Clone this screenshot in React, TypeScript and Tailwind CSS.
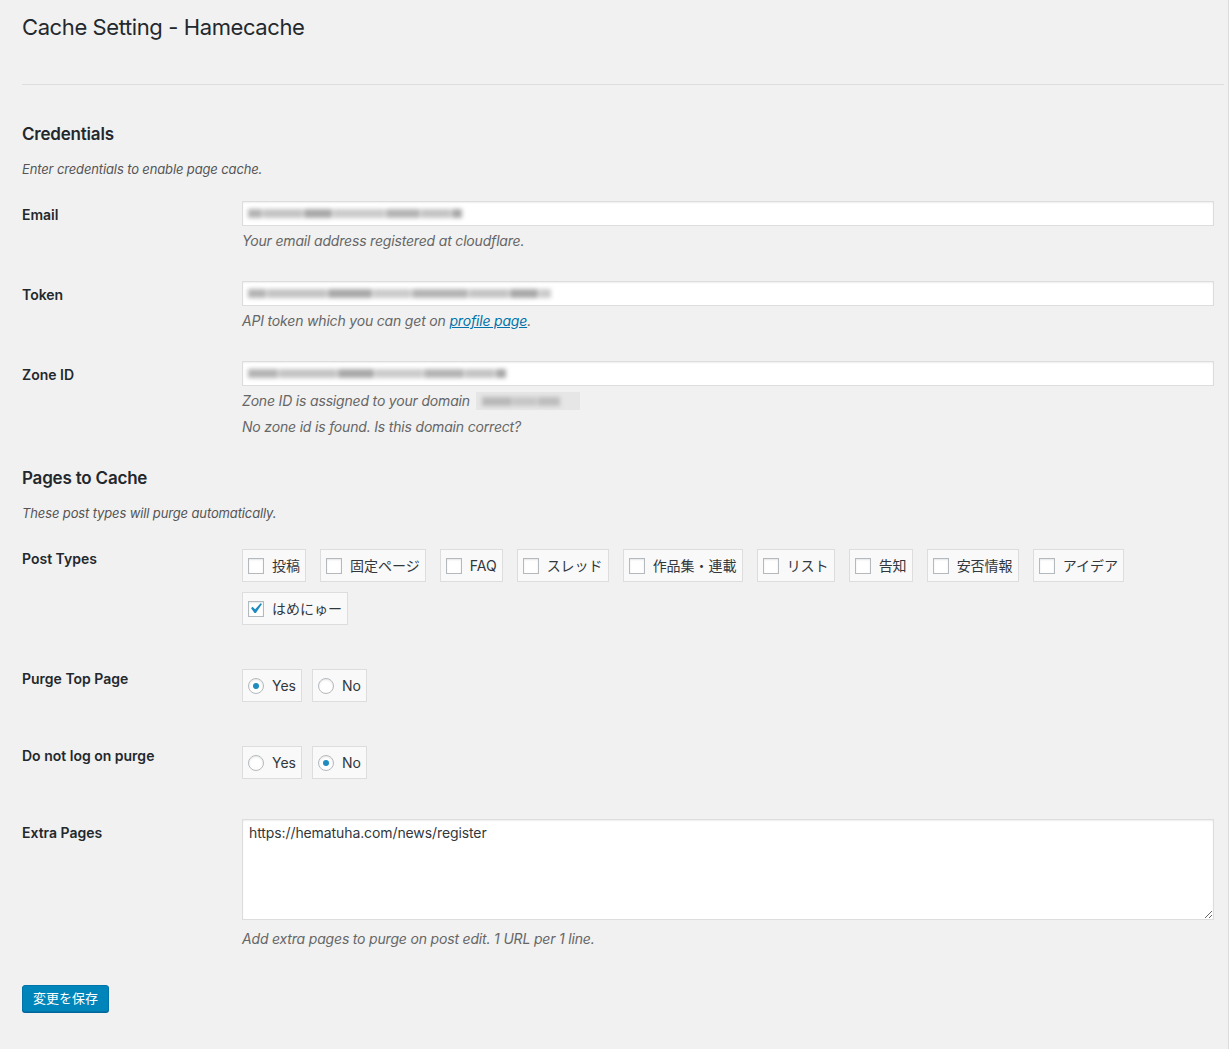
import React from 'react';

const FONT = '"Inter", "Noto Sans CJK JP", sans-serif';

const postTypes: { label: string; checked?: boolean }[] = [
  { label: '投稿' },
  { label: '固定ページ' },
  { label: 'FAQ' },
  { label: 'スレッド' },
  { label: '作品集・連載' },
  { label: 'リスト' },
  { label: '告知' },
  { label: '安否情報' },
  { label: 'アイデア' },
  { label: 'はめにゅー', checked: true },
];

// masked values: grey blocks, blurred
function Masked({ widths, shades }: { widths: number[]; shades: string[] }) {
  return (
    <span className="flex items-center gap-[1px] blur-[2px]">
      {widths.map((w, i) => (
        <span key={i} className="h-[9px] inline-block" style={{ width: w, background: shades[i % shades.length] }} />
      ))}
    </span>
  );
}

function TextInput({ widths }: { widths: number[] }) {
  return (
    <div className="h-[25px] w-[972px] bg-white border border-[#ddd] shadow-[inset_0_1px_2px_rgba(0,0,0,0.07)] flex items-center pl-[5px]">
      <Masked widths={widths} shades={['#b4b4b4', '#c4c4c4', '#a8a8a8', '#cbcbcb']} />
    </div>
  );
}

function Checkbox({ checked }: { checked?: boolean }) {
  return (
    <span className="relative w-4 h-4 bg-white border border-[#b4b9be] shadow-[inset_0_1px_2px_rgba(0,0,0,0.1)] shrink-0">
      {checked && (
        <svg viewBox="0 0 20 20" className="absolute -left-[4px] -top-[4px] w-[21px] h-[21px]">
          <path d="M14.83 4.89l1.34.94-5.81 8.38H9.02L5.78 9.67l1.34-1.25 2.57 2.4z" fill="#1e8cbe" />
        </svg>
      )}
    </span>
  );
}

function Radio({ checked }: { checked?: boolean }) {
  return (
    <span className="w-4 h-4 rounded-full bg-white border border-[#b4b9be] shadow-[inset_0_1px_2px_rgba(0,0,0,0.1)] flex items-center justify-center shrink-0">
      {checked && <span className="w-[6px] h-[6px] rounded-full bg-[#1e8cbe]" />}
    </span>
  );
}

function Choice({ label, children }: { label: string; children: React.ReactNode }) {
  return (
    <label className="h-[33px] flex items-center gap-2 pl-[5px] pr-[5px] border border-[#ddd] bg-[#f9f9f9] text-[14px] text-[#32373c]">
      {children}
      <span>{label}</span>
    </label>
  );
}

function Row({ label, labelPad, children }: { label: string; labelPad: string; children: React.ReactNode }) {
  return (
    <div className="grid grid-cols-[220px_1fr]">
      <div className={`text-[14px] leading-[18px] font-semibold text-[#23282d] ${labelPad}`}>{label}</div>
      <div>{children}</div>
    </div>
  );
}

function Desc({ children, className = '' }: { children: React.ReactNode; className?: string }) {
  return <p className={`text-[14px] leading-[20px] italic tracking-[-0.18px] text-[#666] ${className}`}>{children}</p>;
}

export default function App() {
  return (
    <div className="min-h-screen w-[1229px] bg-[#f1f1f1] border-r border-[#dcdcdc]" style={{ fontFamily: FONT }}>
      <div className="pl-[22px] pr-[4px] pb-10">
        <h1 className="pt-[13px] text-[22px] leading-[29px] tracking-[-0.4px] text-[#23282d]">Cache Setting - Hamecache</h1>
        <hr className="mt-[42px] border-0 border-t border-[#ddd]" />

        {/* Credentials */}
        <h2 className="mt-[38px] text-[17px] leading-[22px] font-semibold tracking-[-0.2px] text-[#23282d]">Credentials</h2>
        <p className="mt-[15px] text-[13px] leading-[18px] italic tracking-[-0.13px] text-[#555]">Enter credentials to enable page cache.</p>

        <div className="mt-[23px]">
          <Row label="Email" labelPad="pt-[5px]">
            <TextInput widths={[14, 40, 28, 52, 34, 30, 10]} />
            <Desc className="mt-[5px]">Your email address registered at cloudflare.</Desc>
          </Row>
        </div>

        <div className="mt-[30px]">
          <Row label="Token" labelPad="pt-[5px]">
            <TextInput widths={[18, 60, 44, 38, 56, 40, 28, 12]} />
            <Desc className="mt-[5px]">
              API token which you can get on{' '}
              <a className="text-[#0073aa] underline">profile page</a>.
            </Desc>
          </Row>
        </div>

        <div className="mt-[30px]">
          <Row label="Zone ID" labelPad="pt-[5px]">
            <TextInput widths={[30, 58, 36, 48, 40, 30, 10]} />
            <Desc className="mt-[5px] flex items-center gap-[6px]">
              <span>Zone ID is assigned to your domain</span>
              <span className="h-[18px] w-[104px] bg-[#e6e6e6] flex items-center px-[6px]">
                <Masked widths={[30, 24, 22]} shades={['#b8b8b8', '#c6c6c6', '#bdbdbd']} />
              </span>
            </Desc>
            <Desc className="mt-[6px]">No zone id is found. Is this domain correct?</Desc>
          </Row>
        </div>

        {/* Pages to Cache */}
        <h2 className="mt-[30px] text-[17px] leading-[22px] font-semibold tracking-[-0.2px] text-[#23282d]">Pages to Cache</h2>
        <p className="mt-[15px] text-[13px] leading-[18px] italic tracking-[-0.13px] text-[#555]">These post types will purge automatically.</p>

        <div className="mt-[27px]">
          <Row label="Post Types" labelPad="pt-[1px]">
            <div className="flex flex-wrap gap-x-[14px] gap-y-[10px] w-[972px]">
              {postTypes.map((p) => (
                <Choice key={p.label} label={p.label}>
                  <Checkbox checked={p.checked} />
                </Choice>
              ))}
            </div>
          </Row>
        </div>

        <div className="mt-[44px]">
          <Row label="Purge Top Page" labelPad="pt-[1px]">
            <div className="flex gap-[10px]">
              <Choice label="Yes"><Radio checked /></Choice>
              <Choice label="No"><Radio /></Choice>
            </div>
          </Row>
        </div>

        <div className="mt-[44px]">
          <Row label="Do not log on purge" labelPad="pt-[1px]">
            <div className="flex gap-[10px]">
              <Choice label="Yes"><Radio /></Choice>
              <Choice label="No"><Radio checked /></Choice>
            </div>
          </Row>
        </div>

        <div className="mt-[40px]">
          <Row label="Extra Pages" labelPad="pt-[5px]">
            <textarea
              readOnly
              defaultValue="https://hematuha.com/news/register"
              className="block w-[972px] h-[101px] bg-white border border-[#ddd] shadow-[inset_0_1px_2px_rgba(0,0,0,0.07)] px-[6px] py-[3px] text-[14px] leading-[20px] tracking-[-0.1px] text-[#32373c] outline-none"
            />
            <Desc className="mt-[9px]">Add extra pages to purge on post edit. 1 URL per 1 line.</Desc>
          </Row>
        </div>

        <button className="mt-[36px] h-[27px] w-[87px] rounded-[3px] bg-[#0085ba] border border-[#0073aa] shadow-[0_1px_0_#006799] text-white text-[13px] leading-none">
          変更を保存
        </button>
      </div>
    </div>
  );
}
